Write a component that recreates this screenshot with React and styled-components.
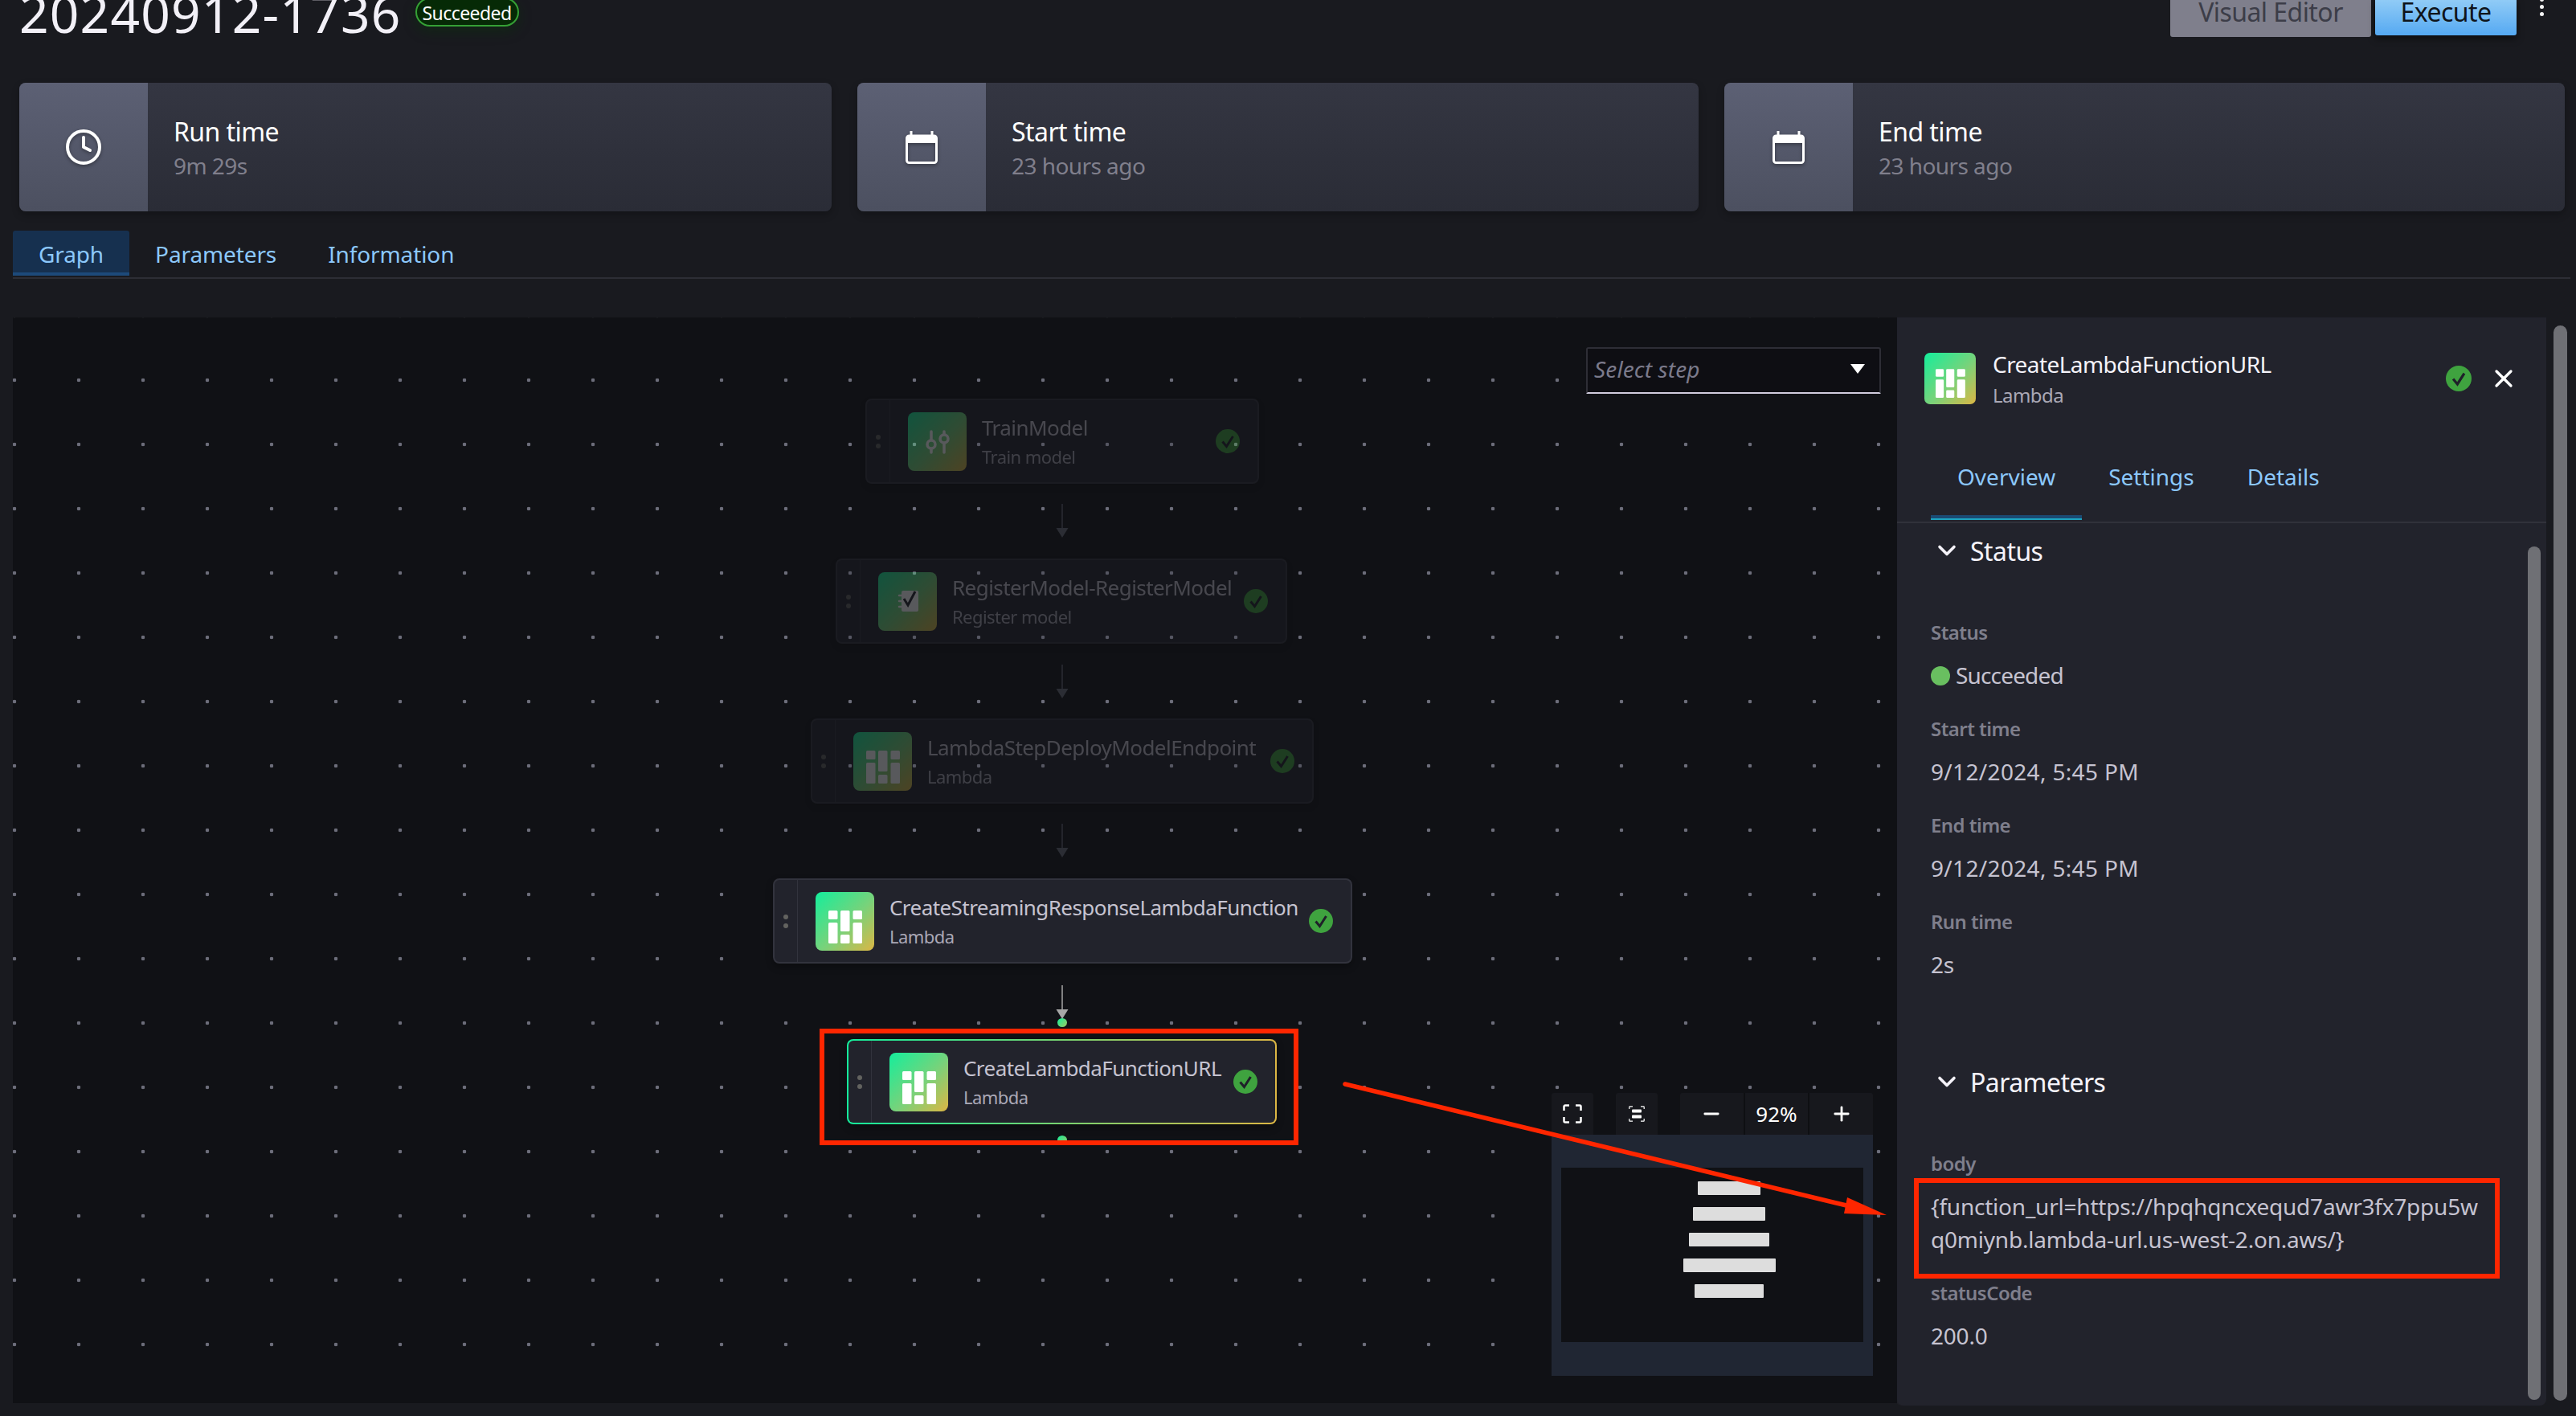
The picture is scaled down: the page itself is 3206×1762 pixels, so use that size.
import React from 'react';
import styled, { createGlobalStyle } from 'styled-components';
import { Clock, ChevronDown, X, Minus, Plus } from 'lucide-react';

const GlobalStyle = createGlobalStyle`
  html, body { margin: 0; padding: 0; background: #191a1f; }
  * { box-sizing: border-box; }
  body { font-family: "Noto Sans", sans-serif; letter-spacing: -0.035em; }
`;

const Page = styled.div`
  position: relative;
  width: 3206px;
  height: 1762px;
  overflow: hidden;
  background: #191a1f;
`;

const Header = styled.header`
  display: flex;
  justify-content: space-between;
  height: 46px;
  padding: 0 40px 0 24px;
`;

const TitleRow = styled.div`
  display: flex;
  align-items: flex-end;
  gap: 17px;
  height: 33px;
`;

const Title = styled.h1`
  margin: 0 0 -16px;
  font-size: 64px;
  line-height: 64px;
  font-weight: 400;
  letter-spacing: 1.2px;
  color: #f2f0f7;
`;

const Pill = styled.span`
  width: 129px;
  height: 36px;
  border: 2px solid #35a035;
  border-radius: 18px;
  background: #062a06;
  color: #fff;
  font-size: 23px;
  line-height: 34px;
  text-align: center;
  box-shadow: 0 6px 16px rgba(6, 60, 6, 0.35);
`;

const Actions = styled.div`
  display: flex;
  align-items: flex-start;
`;

const Button = styled.div`
  height: ${p => (p.$primary ? 44 : 46)}px;
  width: ${p => (p.$primary ? 176 : 250)}px;
  margin-left: ${p => (p.$primary ? 5 : 0)}px;
  border-radius: 0 0 3px 3px;
  background: ${p => (p.$primary ? 'linear-gradient(#90cbf6, #55a9f2)' : '#7f7f8c')};
  color: ${p => (p.$primary ? '#0f141a' : '#3c3d48')};
  font-size: 32px;
  line-height: 30px;
  text-align: center;
  box-shadow: ${p => (p.$primary ? '0 4px 8px rgba(0, 0, 0, 0.5)' : 'none')};
`;

const MoreDots = styled.div`
  display: flex;
  flex-direction: column;
  gap: 4px;
  margin: -3px 0 0 29px;
  i {
    display: block;
    width: 5px;
    height: 5px;
    border-radius: 50%;
    background: #f5f5f5;
  }
`;

const Cards = styled.section`
  display: grid;
  grid-template-columns: 1011px 1047px 1046px;
  gap: 32px;
  margin: 57px 0 0 24px;
`;

const Card = styled.div`
  display: flex;
  height: 160px;
  border-radius: 8px;
  overflow: hidden;
  background: linear-gradient(#343642, #2a2c36);
  box-shadow: 0 4px 10px rgba(0, 0, 0, 0.25);
`;

const CardIcon = styled.div`
  display: flex;
  align-items: center;
  justify-content: center;
  width: 160px;
  background: linear-gradient(#5c6074, #4c5060);
  color: #fff;
  svg { filter: drop-shadow(0 2px 2px rgba(0, 0, 0, 0.35)); }
`;

const CardText = styled.div`
  display: flex;
  flex-direction: column;
  justify-content: center;
  padding: 3px 0 0 32px;
`;

const CardTitle = styled.div`
  font-size: 32px;
  line-height: 42px;
  color: #fff;
`;

const CardValue = styled.div`
  font-size: 28px;
  line-height: 42px;
  color: #807f8c;
`;

const TabBar = styled.nav`
  display: flex;
  width: 3183px;
  height: 60px;
  margin: 24px 0 0 16px;
  border-bottom: 2px solid #2d2e35;
`;

const Tab = styled.div`
  height: 56px;
  padding: 0 32px;
  font-size: 28px;
  line-height: 58px;
  letter-spacing: -0.004em;
  color: #8cc8fb;
  border-radius: 3px 3px 0 0;
  background: ${p => (p.$active ? '#16304f' : 'transparent')};
  border-bottom: 4px solid ${p => (p.$active ? '#1d4a7a' : 'transparent')};
`;

const Main = styled.main`
  display: flex;
  align-items: flex-start;
  margin: 48px 0 0 16px;
`;

const Canvas = styled.div`
  position: relative;
  width: 2345px;
  height: 1351px;
  background-color: #101115;
  background-image: radial-gradient(circle at center, #6c6d7a 0, #6c6d7a 2px, transparent 2.6px);
  background-size: 80px 80px;
  background-position: -38px 38px;
`;

const NodeBox = styled.div`
  position: absolute;
  left: ${p => p.$x}px;
  top: ${p => p.$y}px;
  width: ${p => p.$w}px;
  height: 106px;
  display: flex;
  align-items: center;
  border: 2px solid #32333d;
  border-radius: 8px;
  background: #22232c;
  box-shadow: 0 4px 10px rgba(0, 0, 0, 0.3);
  opacity: ${p => (p.$faded ? 0.3 : 1)};
  ${p => p.$selected && `
    border-color: transparent;
    background:
      linear-gradient(#22232c, #22232c) padding-box,
      linear-gradient(90deg, #14ee9c, #dcb644) border-box;
  `}
`;

const Handle = styled.div`
  display: flex;
  flex-direction: column;
  align-items: center;
  justify-content: center;
  gap: 5px;
  flex: none;
  width: 29px;
  height: 100%;
  border-right: 1px solid #32333d;
  i {
    width: 6px;
    height: 6px;
    border-radius: 50%;
    background: #62625f;
  }
`;

const StepIcon = styled.div`
  display: flex;
  align-items: center;
  justify-content: center;
  flex: none;
  width: ${p => p.$size}px;
  height: ${p => p.$size}px;
  border-radius: ${p => Math.round(p.$size / 9)}px;
  background: linear-gradient(135deg, #14ee9c, #79d27a 55%, #dcb644);
`;

const NodeIcon = styled(StepIcon)`
  margin: 0 19px 0 22px;
`;

const NodeText = styled.div`
  margin-top: 2px;
  white-space: nowrap;
`;

const NodeTitle = styled.div`
  font-size: 26px;
  line-height: 34px;
  margin-bottom: 2px;
  color: #c6c3d1;
`;

const NodeSub = styled.div`
  font-size: 22px;
  line-height: 34px;
  color: #aaa8b6;
`;

const NodeCheck = styled.div`
  display: flex;
  margin: 0 22px 0 auto;
`;

const EdgeWrap = styled.svg`
  position: absolute;
  left: 1298px;
  top: ${p => p.$y}px;
  color: ${p => (p.$faded ? '#2b2d34' : '#a6a6a6')};
`;

const Port = styled.div`
  position: absolute;
  left: 1300px;
  top: ${p => p.$y}px;
  width: 12px;
  height: 11px;
  border-radius: 50%;
  background: linear-gradient(135deg, #14ee9c, #a0c860);
`;

const Select = styled.div`
  position: absolute;
  left: 1958px;
  top: 37px;
  width: 367px;
  height: 58px;
  display: flex;
  align-items: center;
  justify-content: space-between;
  padding: 0 18px 4px 8px;
  background: #0e0e13;
  border: 2px solid #2e2e36;
  border-bottom-color: #d1ccde;
  border-radius: 3px 3px 0 0;
  font-size: 28px;
  font-style: italic;
  letter-spacing: 0.005em;
  color: #7b7a8b;
`;

const Caret = styled.span`
  width: 0;
  height: 0;
  border-left: 9px solid transparent;
  border-right: 9px solid transparent;
  border-top: 12px solid #fff;
`;

const MapDock = styled.div`
  position: absolute;
  left: 1915px;
  top: 965px;
  width: 400px;
`;

const MapControls = styled.div`
  display: flex;
  gap: 28px;
  height: 52px;
`;

const MapBtn = styled.div`
  display: flex;
  align-items: center;
  justify-content: center;
  width: 52px;
  height: 100%;
  background: #17181d;
  color: #fff;
  border-radius: 3px 3px 0 0;
`;

const ZoomGroup = styled.div`
  display: flex;
  flex: 1;
  background: #17181d;
  border-radius: 3px 3px 0 0;
  color: #fff;
  font-size: 26px;
  letter-spacing: 0;
`;

const ZoomCell = styled.div`
  display: flex;
  align-items: center;
  justify-content: center;
  flex: 1;
  border-left: ${p => (p.$sep ? '2px solid #0e0f12' : 'none')};
`;

const MiniMap = styled.div`
  height: 300px;
  padding: 41px 12px 42px;
  background: #202633;
`;

const MiniInner = styled.div`
  display: flex;
  flex-direction: column;
  align-items: center;
  gap: 15px;
  height: 100%;
  padding: 17px 0 0 42px;
  background: #101115;
`;

const MiniBar = styled.div`
  width: ${p => p.$w}px;
  height: 17px;
  border-radius: 1px;
  background: #dddddd;
`;

const Panel = styled.aside`
  width: 808px;
  height: 1354px;
  border-radius: 0 0 8px 8px;
  background: #22232c;
  box-shadow: -2px 0 0 #1f2026;
  overflow: hidden;
`;

const PanelHead = styled.div`
  display: flex;
  align-items: flex-start;
  height: 145px;
  padding: 44px 0 0 34px;
`;

const PanelTitles = styled.div`
  margin-left: 21px;
`;

const PanelTitle = styled.div`
  font-size: 28px;
  line-height: 28px;
  color: #f5f3fa;
`;

const PanelSub = styled.div`
  margin-top: 11px;
  font-size: 24px;
  line-height: 28px;
  color: #aaa8b6;
`;

const PanelActions = styled.div`
  display: flex;
  align-items: center;
  gap: 22px;
  margin: 14px 0 0 auto;
  padding-right: 35px;
  color: #fff;
`;

const PanelTabs = styled.div`
  display: flex;
  height: 111px;
  padding: 0 0 0 42px;
  border-bottom: 2px solid #30313a;
`;

const PanelTab = styled.div`
  height: 107px;
  padding: 0 33px;
  font-size: 28px;
  line-height: 106px;
  letter-spacing: 0;
  color: #8cc8fb;
  box-shadow: ${p => (p.$active ? 'inset 0 -2px 0 #1da3c0, inset 0 -6px 0 #1b4a73' : 'none')};
`;

const PanelBody = styled.div`
  position: relative;
  height: 1098px;
  padding: 14px 0 0 42px;
`;

const InnerScroll = styled.div`
  position: absolute;
  left: 785px;
  top: 29px;
  width: 16px;
  height: 1062px;
  border-radius: 8px;
  background: #6f7075;
`;

const SectionHead = styled.div`
  display: flex;
  align-items: center;
  gap: 11px;
  height: 40px;
  margin: ${p => p.$gap || 0}px 0 66px 2px;
  font-size: 32px;
  color: #f5f3fa;
`;

const Field = styled.div`
  margin-bottom: 30px;
`;

const FieldLabel = styled.div`
  height: 32px;
  margin-bottom: 17px;
  font-size: 24px;
  line-height: 32px;
  font-weight: 600;
  color: #7f7f8c;
`;

const FieldValue = styled.div`
  display: flex;
  align-items: center;
  gap: 7px;
  width: 692px;
  font-size: 28px;
  line-height: 41px;
  letter-spacing: ${p => p.$spacing ?? -0.008}em;
  color: #c6c3d1;
  word-break: break-all;
`;

const StatusDot = styled.span`
  width: 24px;
  height: 24px;
  border-radius: 50%;
  background: #69bf60;
`;

const OuterScroll = styled.div`
  width: 17px;
  height: 1338px;
  margin: 10px 0 0 9px;
  border-radius: 9px;
  background: #6f7075;
`;

const AnnotationBox = styled.div`
  position: absolute;
  left: ${p => p.$x}px;
  top: ${p => p.$y}px;
  width: ${p => p.$w}px;
  height: ${p => p.$h}px;
  border: 6px solid #ff2600;
`;

const AnnotationArrow = styled.svg`
  position: absolute;
  left: 0;
  top: 0;
`;

const LambdaGlyph = ({ size, fill = '#fff' }) => (
  <svg width={size} height={size} viewBox="0 0 73 73" fill={fill}>
    <rect x="16" y="23" width="11.5" height="11" rx="1.5" />
    <rect x="16" y="38" width="11.5" height="26" rx="1.5" />
    <rect x="31" y="23" width="11.5" height="26" rx="1.5" />
    <rect x="31" y="53" width="11.5" height="11" rx="1.5" />
    <rect x="46.5" y="23" width="11.5" height="11" rx="1.5" />
    <rect x="46.5" y="38" width="11.5" height="26" rx="1.5" />
  </svg>
);

const SlidersGlyph = ({ size }) => (
  <svg width={size} height={size} viewBox="0 0 73 73" fill="none" stroke="#fff" strokeWidth="3.5" strokeLinecap="round">
    <path d="M29 24v10M29 46v4M45 24v3M45 39v11" />
    <circle cx="29" cy="40" r="5" />
    <circle cx="45" cy="33" r="5" />
  </svg>
);

const NotebookGlyph = ({ size }) => (
  <svg width={size} height={size} viewBox="0 0 73 73">
    <rect x="29" y="23" width="21" height="26" rx="2" fill="#fff" />
    <path d="M26 29h5M26 36h5M26 43h5" stroke="#fff" strokeWidth="2.5" strokeLinecap="round" />
    <path d="M32 33l5 8 9-17" fill="none" stroke="#22232c" strokeWidth="3" />
  </svg>
);

const CheckBadge = ({ size = 30 }) => (
  <svg width={size} height={size} viewBox="0 0 30 30">
    <circle cx="15" cy="15" r="15" fill="#3fa33f" />
    <path d="M8.5 15.5l5 6 8-12.5" fill="none" stroke="#1f2029" strokeWidth="3" />
  </svg>
);

const CalendarGlyph = () => (
  <svg width="40" height="42" viewBox="0 0 40 42" fill="none">
    <path d="M7 8V1M33 8V1" stroke="#fff" strokeWidth="3" />
    <rect x="1.5" y="7" width="37" height="33.5" rx="3" stroke="#fff" strokeWidth="3" />
    <rect x="1.5" y="7" width="37" height="9" fill="#fff" />
  </svg>
);

const FullscreenGlyph = () => (
  <svg width="24" height="24" viewBox="0 0 24 24" fill="none" stroke="#fff" strokeWidth="2.5">
    <path d="M8 1.5H3A1.5 1.5 0 0 0 1.5 3v5M16 1.5h5A1.5 1.5 0 0 1 22.5 3v5M8 22.5H3A1.5 1.5 0 0 1 1.5 21v-5M16 22.5h5a1.5 1.5 0 0 0 1.5-1.5v-5" />
  </svg>
);

const FitGlyph = () => (
  <svg width="20" height="20" viewBox="0 0 20 20" fill="none" stroke="#fff" strokeWidth="1.2">
    <path d="M5 .8H1.5A.7.7 0 0 0 .8 1.5V4M15 .8h3.5a.7.7 0 0 1 .7.7V4M5 19.2H1.5a.7.7 0 0 1-.7-.7V16M15 19.2h3.5a.7.7 0 0 0 .7-.7V16" />
    <rect x="4" y="4.5" width="12" height="4" rx="1" fill="#fff" stroke="none" />
    <rect x="4" y="11.5" width="12" height="4" rx="1" fill="#fff" stroke="none" />
  </svg>
);

const Edge = ({ y, faded }) => (
  <EdgeWrap $y={y} $faded={faded} width="16" height="42" viewBox="0 0 16 42">
    <path d="M8 0v32" stroke="currentColor" strokeWidth="1.5" />
    <path d="M0.5 30h15L8 42z" fill="currentColor" />
  </EdgeWrap>
);

const steps = [
  { x: 1061, y: 101, w: 490, title: 'TrainModel', sub: 'Train model', Glyph: SlidersGlyph, faded: true },
  { x: 1024, y: 300, w: 562, title: 'RegisterModel-RegisterModel', sub: 'Register model', Glyph: NotebookGlyph, faded: true },
  { x: 993, y: 499, w: 626, title: 'LambdaStepDeployModelEndpoint', sub: 'Lambda', Glyph: LambdaGlyph, faded: true },
  { x: 946, y: 698, w: 721, title: 'CreateStreamingResponseLambdaFunction', sub: 'Lambda', Glyph: LambdaGlyph },
  { x: 1038, y: 898, w: 535, title: 'CreateLambdaFunctionURL', sub: 'Lambda', Glyph: LambdaGlyph, selected: true },
];

const App = () => (
  <Page>
    <GlobalStyle />
    <Header>
      <TitleRow>
        <Title>20240912-1736</Title>
        <Pill>Succeeded</Pill>
      </TitleRow>
      <Actions>
        <Button>Visual Editor</Button>
        <Button $primary>Execute</Button>
        <MoreDots><i /><i /><i /></MoreDots>
      </Actions>
    </Header>

    <Cards>
      <Card>
        <CardIcon><Clock size={48} strokeWidth={2} /></CardIcon>
        <CardText><CardTitle>Run time</CardTitle><CardValue>9m 29s</CardValue></CardText>
      </Card>
      <Card>
        <CardIcon><CalendarGlyph /></CardIcon>
        <CardText><CardTitle>Start time</CardTitle><CardValue>23 hours ago</CardValue></CardText>
      </Card>
      <Card>
        <CardIcon><CalendarGlyph /></CardIcon>
        <CardText><CardTitle>End time</CardTitle><CardValue>23 hours ago</CardValue></CardText>
      </Card>
    </Cards>

    <TabBar>
      <Tab $active>Graph</Tab>
      <Tab>Parameters</Tab>
      <Tab>Information</Tab>
    </TabBar>

    <Main>
      <Canvas>
        <Select>Select step<Caret /></Select>
        {steps.map(s => (
          <NodeBox key={s.title} $x={s.x} $y={s.y} $w={s.w} $faded={s.faded} $selected={s.selected}>
            <Handle><i /><i /></Handle>
            <NodeIcon $size={73}><s.Glyph size={73} /></NodeIcon>
            <NodeText>
              <NodeTitle>{s.title}</NodeTitle>
              <NodeSub>{s.sub}</NodeSub>
            </NodeText>
            <NodeCheck><CheckBadge /></NodeCheck>
          </NodeBox>
        ))}
        <Edge y={232} faded />
        <Edge y={432} faded />
        <Edge y={630} faded />
        <Edge y={831} />
        <Port $y={872} />
        <Port $y={1018} />
        <MapDock>
          <MapControls>
            <MapBtn><FullscreenGlyph /></MapBtn>
            <MapBtn><FitGlyph /></MapBtn>
            <ZoomGroup>
              <ZoomCell><Minus size={28} strokeWidth={2.4} /></ZoomCell>
              <ZoomCell $sep>92%</ZoomCell>
              <ZoomCell $sep><Plus size={28} strokeWidth={2.4} /></ZoomCell>
            </ZoomGroup>
          </MapControls>
          <MiniMap>
            <MiniInner>
              {[78, 90, 100, 115, 86].map(w => <MiniBar key={w} $w={w} />)}
            </MiniInner>
          </MiniMap>
        </MapDock>
      </Canvas>

      <Panel>
        <PanelHead>
          <StepIcon $size={64}><LambdaGlyph size={64} /></StepIcon>
          <PanelTitles>
            <PanelTitle>CreateLambdaFunctionURL</PanelTitle>
            <PanelSub>Lambda</PanelSub>
          </PanelTitles>
          <PanelActions>
            <CheckBadge size={32} />
            <X size={36} strokeWidth={2.2} />
          </PanelActions>
        </PanelHead>
        <PanelTabs>
          <PanelTab $active>Overview</PanelTab>
          <PanelTab>Settings</PanelTab>
          <PanelTab>Details</PanelTab>
        </PanelTabs>
        <PanelBody>
          <InnerScroll />
          <SectionHead><ChevronDown size={36} strokeWidth={2.4} />Status</SectionHead>
          <Field>
            <FieldLabel>Status</FieldLabel>
            <FieldValue $spacing={-0.03}><StatusDot />Succeeded</FieldValue>
          </Field>
          <Field>
            <FieldLabel>Start time</FieldLabel>
            <FieldValue $spacing={0.012}>9/12/2024, 5:45 PM</FieldValue>
          </Field>
          <Field>
            <FieldLabel>End time</FieldLabel>
            <FieldValue $spacing={0.012}>9/12/2024, 5:45 PM</FieldValue>
          </Field>
          <Field>
            <FieldLabel>Run time</FieldLabel>
            <FieldValue>2s</FieldValue>
          </Field>
          <SectionHead $gap={105}><ChevronDown size={36} strokeWidth={2.4} />Parameters</SectionHead>
          <Field>
            <FieldLabel>body</FieldLabel>
            <FieldValue>{'{function_url=https://hpqhqncxequd7awr3fx7ppu5wq0miynb.lambda-url.us-west-2.on.aws/}'}</FieldValue>
          </Field>
          <Field>
            <FieldLabel>statusCode</FieldLabel>
            <FieldValue>200.0</FieldValue>
          </Field>
        </PanelBody>
      </Panel>
      <OuterScroll />
    </Main>

    <AnnotationBox $x={1020} $y={1280} $w={596} $h={145} />
    <AnnotationBox $x={2382} $y={1466} $w={729} $h={125} />
    <AnnotationArrow width="3206" height="1762">
      <path d="M1674 1349L2298 1500" stroke="#ff2600" strokeWidth="5.5" strokeLinecap="round" />
      <path d="M2299 1490L2348 1512L2295 1510Z" fill="#ff2600" />
    </AnnotationArrow>
  </Page>
);

export default App;
